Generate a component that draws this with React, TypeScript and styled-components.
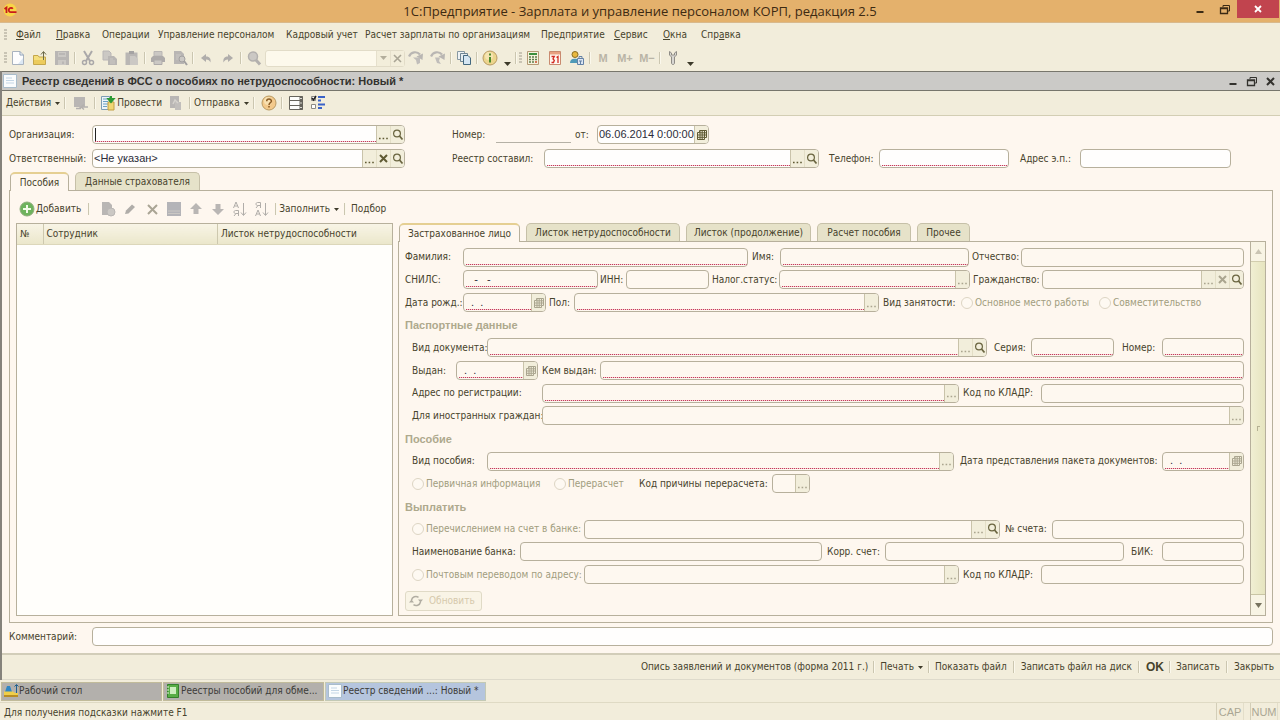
import React from 'react';
import styled, { createGlobalStyle, css } from 'styled-components';

const ui = '"DejaVu Sans Condensed", "DejaVu Sans", sans-serif';
const arial = '"Liberation Sans", Arial, sans-serif';
const c = {
  bar: '#f2eddb',
  form: '#fef7ef',
  text: '#47432c',
  line: '#b7b09c',
  dim: '#a19d7e',
  head: '#aea98d',
  tab: '#e6e2c9',
};

const GlobalStyle = createGlobalStyle`
  *, *::before, *::after { box-sizing: border-box; }
  body { margin: 0; background: ${c.bar}; }
  button, input, table { font: inherit; color: inherit; }
  button { border: 0; padding: 0; background: none; white-space: nowrap; }
`;

const Shell = styled.div`
  min-height: 100vh;
  display: flex;
  flex-direction: column;
  font: 10px/14px ${ui};
  color: ${c.text};
  background: ${c.bar};
`;

/* ---------- window frame ---------- */

const TitleBar = styled.header`
  height: 23px;
  display: grid;
  grid-template-columns: 1fr auto 1fr;
  background: #e4b16c;
  border-bottom: 1px solid #d9b98c;
`;
const AppIcon = styled.div`
  padding: 3px 0 0 3px;
  svg { display: block; }
`;
const AppTitle = styled.h1`
  margin: 0;
  font: 13px/23px "Open Sans", sans-serif;
  color: #3d2a12;
`;
const WindowButtons = styled.div`
  display: flex;
  justify-content: flex-end;
  padding-right: 1px;
`;
const WindowButton = styled.button<{ $close?: boolean }>`
  width: ${p => (p.$close ? 42 : 25)}px;
  height: 18px;
  display: flex;
  align-items: center;
  justify-content: center;
  color: ${p => (p.$close ? '#fff' : '#3a2a14')};
  background: ${p => (p.$close ? '#c1444e' : 'none')};
`;

const MenuBar = styled.nav`
  height: 23px;
  display: flex;
  align-items: center;
  padding-left: 4px;
`;
const MenuItem = styled.button<{ $w: number }>`
  width: ${p => p.$w}px;
  text-align: left;
  &:first-of-type { margin-left: 9px; }
`;
const Grip = styled.i`
  width: 3px;
  height: 12px;
  background: repeating-linear-gradient(#c9c4b4 0 2px, transparent 2px 3px);
`;

const ToolBar = styled.div`
  height: 25px;
  display: flex;
  align-items: center;
  padding: 0 0 1px 4px;
`;
const IconButton = styled.button<{ $w?: number; $low?: boolean }>`
  width: ${p => p.$w ?? 22}px;
  height: 20px;
  display: flex;
  justify-content: center;
  align-items: ${p => (p.$low ? 'flex-end' : 'center')};
  padding-bottom: ${p => (p.$low ? 2 : 0)}px;
  svg { display: block; }
`;
const MemoryButton = styled(IconButton)`
  font: bold 11px/14px ${arial};
  color: #b9b4a6;
`;
const DimCross = styled.span`
  display: flex;
  color: #aaa595;
`;
const Separator = styled.i<{ $m?: number }>`
  width: 2px;
  height: 12px;
  margin: 0 ${p => p.$m ?? 1}px;
  border-left: 1px solid #cbc6b0;
  border-right: 1px solid #fbf8ec;
`;
const SearchBox = styled.div`
  width: 140px;
  height: 17px;
  display: flex;
  border: 1px solid #e2dcc8;
  border-radius: 3px;
  background: #fdf9ec;
  input {
    flex: 1;
    min-width: 0;
    border: 0;
    background: none;
  }
  button {
    width: 14px;
    display: flex;
    align-items: center;
    justify-content: center;
    border-left: 1px solid #e6e0cc;
    background: #f3eedb;
  }
`;

/* ---------- document window ---------- */

const DocWindow = styled.main`
  flex: 1;
  display: flex;
  flex-direction: column;
  border-left: 2px solid #85827b;
`;
const DocTitle = styled.div`
  height: 20px;
  display: flex;
  align-items: center;
  padding-left: 1px;
  background: #cbcac7;
  border-top: 1px solid #77766c;
  border-bottom: 1px solid #77766c;
  h2 {
    flex: 1;
    margin: 0 0 0 5px;
    font: bold 11px/16px ${arial};
    color: #33322e;
  }
  button {
    width: 19px;
    height: 16px;
    display: flex;
    align-items: center;
    justify-content: center;
    color: #33322e;
  }
`;
const DocToolBar = styled.div`
  height: 25px;
  display: flex;
  align-items: center;
  padding: 0 4px;
  border-bottom: 1px solid #d3ceb4;
`;
const TextButton = styled.button<{ $bold?: boolean; $h?: number; $icon?: boolean }>`
  display: flex;
  align-items: center;
  gap: ${p => (p.$icon ? 1 : 4)}px;
  padding: 0 ${p => p.$h ?? 0}px;
  ${p => p.$bold && css`font: bold 12px/14px ${arial};`}
`;

const Body = styled.div`
  flex: 1;
  display: flex;
  flex-direction: column;
  padding: 9px 7px 7px;
  background: ${c.form};
`;
const HeaderGrid = styled.div`
  display: grid;
  grid-template-columns: 83px 313fr 47px 92px 275fr 60px 130fr 71px 151fr 42px;
  grid-auto-rows: 19px;
  row-gap: 5px;
`;
const NumberGroup = styled.div`
  grid-column: 4 / -1;
  display: grid;
  grid-template-columns: 44px 75px 26px 112px;
`;
const NumberInput = styled.input`
  min-width: 0;
  height: 18px;
  border: 0;
  border-bottom: 1px solid #b5b1a6;
  background: none;
`;

const Label = styled.label<{ $l?: number; $col?: number }>`
  padding-left: ${p => p.$l ?? 0}px;
  align-self: center;
  white-space: nowrap;
  ${p => p.$col && css`grid-column: ${p.$col};`}
`;
const FieldBox = styled.div<{ $editable?: boolean }>`
  min-width: 0;
  height: 19px;
  display: flex;
  border: 1px solid ${c.line};
  border-radius: 4px;
  overflow: hidden;
  background: ${p => (p.$editable ? '#fffefd' : '#fef8f0')};
`;
const Caret = styled.i`
  width: 1px;
  height: 13px;
  margin: 2px -3px 0 2px;
  background: #222;
`;
const FieldInput = styled.input<{ $required?: boolean }>`
  flex: 1;
  min-width: 0;
  height: 16px;
  margin: 0 0 0 1px;
  padding: 0 0 1px;
  border: 0;
  outline: 0;
  background: none;
  font: 11px/15px ${arial};
  color: #2d2d3a;
  ${p => p.$required && css`
    background: repeating-linear-gradient(90deg, #c23c5c 0 1px, #f6c9cd 1px 2px) 1px bottom / 100% 1px no-repeat;
  `}
`;
const FieldButton = styled.button<{ $first: boolean; $dim?: boolean }>`
  width: 14px;
  display: flex;
  align-items: center;
  justify-content: center;
  background: #f2eedb;
  border-left: 1px solid ${p => (p.$first ? '#c9c3aa' : '#e3dec6')};
  color: ${p => (p.$dim ? '#aaa58f' : '#5f5a33')};
`;

/* ---------- tabs ---------- */

const Tabs = styled.div`
  display: flex;
  align-items: flex-end;
  gap: 6px;
  height: 18px;
  padding-left: 1px;
`;
const TopTabs = styled(Tabs)`
  margin-top: 4px;
`;
const Tab = styled.button<{ $w: number; $on?: boolean }>`
  width: ${p => p.$w}px;
  height: 18px;
  border: 1px solid #c6c0a8;
  border-bottom: 0;
  border-radius: 5px 5px 0 0;
  background: ${c.tab};
  ${p => p.$on && css`
    height: 19px;
    margin-bottom: -1px;
    position: relative;
    border-color: ${c.line};
    border-top: 2px solid #e5cf92;
    background: ${c.form};
  `}
`;
const Panel = styled.section`
  flex: 1;
  display: flex;
  flex-direction: column;
  padding: 6px;
  border: 1px solid ${c.line};
`;
const PanelToolBar = styled.div`
  height: 24px;
  display: flex;
  align-items: center;
  margin-bottom: 2px;
  padding-left: 3px;
`;
const Split = styled.div`
  flex: 1;
  display: grid;
  grid-template-columns: 377fr 868fr;
  gap: 5px;
`;
const GridBox = styled.div`
  border: 1px solid ${c.line};
  background: #fffefb;
`;
const Table = styled.table`
  width: 100%;
  table-layout: fixed;
  border-collapse: collapse;
  th {
    height: 20px;
    padding: 0 3px;
    font-weight: normal;
    text-align: left;
    background: linear-gradient(#f8f4e6, #ebe7cb);
    border-bottom: 1px solid #dcd7ba;
  }
  th + th { border-left: 1px solid #cdc8ae; }
`;
const Details = styled.div`
  min-width: 0;
  display: flex;
  flex-direction: column;
`;
const Pane = styled.div`
  flex: 1;
  display: flex;
  border: 1px solid ${c.line};
`;
const Form = styled.form`
  flex: 1;
  min-width: 0;
  display: flex;
  flex-direction: column;
  padding: 4px 6px;
`;
const Rows = styled.div`
  flex: 1;
  display: grid;
  grid-template-rows: repeat(15, 1fr);
  margin-bottom: 5px;
`;
const Row = styled.div<{ $cols: string; $indent?: boolean }>`
  display: grid;
  grid-template-columns: ${p => p.$cols};
  align-items: center;
  padding-left: ${p => (p.$indent ? 7 : 0)}px;
`;
const GroupTitle = styled.h3`
  margin: 0;
  align-self: center;
  font: bold 11px/14px ${arial};
  color: ${c.head};
`;
const RadioLabel = styled.label`
  display: flex;
  align-items: center;
  gap: 2px;
  white-space: nowrap;
  color: ${c.dim};
  input {
    appearance: none;
    flex: none;
    width: 12px;
    height: 12px;
    margin: 0;
    border: 1px solid #ddd5c4;
    border-radius: 50%;
    background: #fef9f2;
  }
`;
const RefreshButton = styled.button`
  align-self: flex-start;
  width: 77px;
  height: 20px;
  display: flex;
  align-items: center;
  gap: 6px;
  padding-left: 3px;
  border: 1px solid #e0dac6;
  border-radius: 3px;
  background: #f9f4e6;
  color: #d6c9ac;
`;
const ScrollBar = styled.div`
  width: 15px;
  display: flex;
  flex-direction: column;
  border-left: 1px solid ${c.line};
  button {
    height: 20px;
    display: flex;
    align-items: center;
    justify-content: center;
    background: #f8f4e4;
    border-bottom: 1px solid #d2cdae;
  }
  button:last-child { border: 0; }
`;
const Thumb = styled.i`
  flex: 1;
  display: flex;
  align-items: center;
  justify-content: center;
  background: linear-gradient(90deg, #f1efd3, #e6e4bf);
  border-bottom: 1px solid #c9c5a4;
`;
const CommentRow = styled.div`
  display: grid;
  grid-template-columns: 83px 1fr;
  margin-top: 4px;
`;
const CommandBar = styled.footer`
  height: 27px;
  display: flex;
  align-items: center;
  justify-content: flex-end;
  padding-right: 6px;
  border-top: 2px solid #d2cdb9;
  border-bottom: 1px solid #dedacb;
`;

/* ---------- bottom bars ---------- */

const TaskBar = styled.div`
  height: 22px;
  display: flex;
  align-items: center;
  gap: 1px;
  padding-left: 1px;
`;
const Task = styled.button<{ $on?: boolean }>`
  width: 161px;
  height: 19px;
  display: flex;
  align-items: center;
  padding-left: 1px;
  color: #3c3b38;
  background: ${p => (p.$on ? '#b5c5de' : '#b3b0ac')};
  border: 1px solid ${p => (p.$on ? '#c3c9b5' : '#c1bb9a')};
  svg { flex: none; width: 16px; }
`;
const StatusBar = styled.div`
  height: 18px;
  display: flex;
  align-items: center;
  gap: 6px;
  padding: 0 2px 0 4px;
  border-top: 1px solid #dfdac4;
  span { flex: 1; padding-top: 2px; }
`;
const KeyState = styled.b`
  width: 28px;
  height: 17px;
  font: 11px/19px ${arial};
  text-align: center;
  color: #aaa693;
  border-left: 1px solid #d3ceb8;
  border-right: 1px solid #e3dec9;
`;

/* ---------- icons ---------- */

type IconProps = { children: React.ReactNode; w?: number; h?: number };
const Svg = ({ children, w = 16, h = 16 }: IconProps) => (
  <svg width={w} height={h} viewBox={`0 0 ${w} ${h}`} fill="none" aria-hidden="true">{children}</svg>
);
const g = '#b9b6b4';
const g2 = '#cbc8c4';

const Logo = () => (
  <Svg w={14} h={14}>
    <circle cx="7" cy="7" r="6.5" fill="#f8d548" />
    <path d="M1.500 6 3.500 4.500V10" stroke="#c81a1a" strokeWidth="1.800" />
    <path d="M9.800 5.800A2.200 2.200 0 1 0 8 9.200H13.500" stroke="#c81a1a" strokeWidth="1.800" />
  </Svg>
);
const Minimize = () => <Svg w={10} h={10}><path d="M1.500 8H8.500" stroke="currentColor" strokeWidth="2" /></Svg>;
const Restore = () => (
  <Svg w={12} h={11}>
    <path d="M4 3V1.500H10.500V7H9" stroke="currentColor" />
    <path d="M1.500 4H8.500V9.500H1.500ZM1.500 4.500H8.500" stroke="currentColor" strokeWidth="1.300" />
  </Svg>
);
const Cross = ({ s = 9, t = 1.6 }: { s?: number; t?: number }) => (
  <Svg w={s} h={s}><path d={`M1 1 ${s - 1} ${s - 1}M${s - 1} 1 1 ${s - 1}`} stroke="currentColor" strokeWidth={t} /></Svg>
);
const Page = () => (
  <Svg>
    <path d="M2.500 1.500H10L13.500 5V14.500H2.500Z" fill="#fdfdfe" stroke="#a9b3bf" />
    <path d="M10 1.500V5H13.500" stroke="#8fa2b8" />
    <path d="M8 14H13V8Z" fill="#dce8f4" />
  </Svg>
);
const Folder = () => (
  <Svg>
    <path d="M1.500 5.500H6L7 7H13.500V14.500H1.500Z" fill="#f5df7d" stroke="#c5a74b" />
    <path d="M2 10H13V14H2Z" fill="#eccb5c" />
    <path d="M11.500 10V2M9 4.500 11.500 1.500 14 4.500" stroke="#6d6a4a" />
  </Svg>
);
const Floppy = () => (
  <Svg>
    <path d="M1 1H15V15H1Z" fill={g} />
    <path d="M4 2H12V7H4ZM4 10H12V15H4Z" fill={g2} />
    <path d="M5 4H11M9 11.500V14" stroke="#a9a6a6" />
  </Svg>
);
const Cut = () => (
  <Svg>
    <path d="M4 1 10 11M12 1 6 11" stroke="#aaa8a9" strokeWidth="2" />
    <circle cx="4.500" cy="12.500" r="2" stroke="#aaa8a9" strokeWidth="1.500" />
    <circle cx="11.500" cy="12.500" r="2" stroke="#aaa8a9" strokeWidth="1.500" />
  </Svg>
);
const Copy = () => (
  <Svg>
    <path d="M1 1H7L9 3V10H1Z" fill={g2} stroke="#b9b6b6" />
    <path d="M6 6H12L15 9V15H6Z" fill={g} />
    <path d="M8 9H11M8 11H13M8 13H13" stroke={g2} />
  </Svg>
);
const Paste = () => (
  <Svg>
    <path d="M1.500 2.500H13.500V15H1.500Z" fill={g} />
    <path d="M5 1H10V4H5Z" fill="#a5a3a3" />
    <path d="M6 6H11L14 9V15H6Z" fill={g2} />
  </Svg>
);
const Printer = () => (
  <Svg>
    <path d="M4 1.500H12V6H4Z" fill={g2} stroke={g} />
    <path d="M3 6H13L15 8V12H1V8Z" fill="#aeabaa" />
    <path d="M4 10H12V14.500H4Z" fill={g2} stroke="#aeabaa" />
  </Svg>
);
const Preview = () => (
  <Svg>
    <path d="M2 1H9L12 4V14H2Z" fill={g} />
    <path d="M4 5H9M4 7H8M4 9H7" stroke={g2} />
    <circle cx="10" cy="9" r="3" fill={g2} stroke="#a2a0a0" />
    <path d="m12 11 3 4" stroke="#a2a0a0" strokeWidth="2" />
  </Svg>
);
const Undo = ({ flip }: { flip?: boolean }) => (
  <Svg>
    <path transform={flip ? 'translate(16 0) scale(-1 1)' : undefined} d="M3 8 8 4V6.500C12 6.500 13 9 12.500 12.500 11.500 10.500 10.500 9.500 8 9.500V12Z" fill="#b0adab" />
  </Svg>
);
const Search = () => (
  <Svg>
    <circle cx="7" cy="6.500" r="4.500" fill={g2} stroke="#b3b0ae" strokeWidth="1.500" />
    <path d="m10 10 4 4.500" stroke="#b3b0ae" strokeWidth="3" />
  </Svg>
);
const Turn = ({ flip }: { flip?: boolean }) => (
  <Svg>
    <path d="M1 6.500C3 1.500 9 1 12 4.500" stroke="#b9b6b3" strokeWidth="2.200" />
    <path d="M8.500 6.500 15 3.500 14.500 10Z" fill="#b9b6b3" />
    <path d={flip ? 'M5 7.500H10L9 11 11 14 7 13Z' : 'M5 7.500H12V13L9 14.500 8 10Z'} fill="#c0bdba" />
  </Svg>
);
const Windows = () => (
  <Svg>
    <path d="M1.500 1.500H8.500V9.500H1.500Z" fill="#eef2f4" stroke="#8798a2" />
    <path d="M4.500 3.500H11.500V11.500H4.500Z" fill="#e6edf1" stroke="#6f8593" />
    <path d="M7.500 5.500H12L14.500 8V14.500H7.500Z" fill="#d5e6f3" stroke="#44687f" />
  </Svg>
);
const Round = ({ mark, color }: { mark: 'i' | '?'; color: string }) => (
  <Svg>
    <circle cx="8" cy="8" r="7" fill={mark === 'i' ? '#ecd58d' : '#f3c98b'} stroke="#b99a62" />
    <circle cx="7" cy="6" r="4" fill="#faeac1" opacity=".7" />
    {mark === 'i'
      ? <path d="M8 3.500V5.500M8 7V12.500" stroke={color} strokeWidth="2" />
      : <path d="M5.700 6.200C5.700 3.300 10.500 3.300 10.400 6.200 10.300 7.700 8 7.800 8 10M8 11V12.600" stroke={color} strokeWidth="1.500" />}
  </Svg>
);
const Down = ({ color = '#3d3a2a', s = 7 }: { color?: string; s?: number }) => (
  <Svg w={s} h={s > 5 ? 4 : 3}><path d={`M0 0H${s}L${s / 2} ${s > 5 ? 4 : 3}Z`} fill={color} /></Svg>
);
const Calculator = () => (
  <Svg>
    <path d="M2.500 1.500H13.500V14.500H2.500Z" fill="#f6f2dd" stroke="#b59a74" />
    <path d="M4 3H12V5H4Z" fill="#3c8f3c" />
    <path d="M4 7H6M7 7H9M10 7H12M4 9.500H6M7 9.500H9M10 9.500H12M4 12H6M7 12H9" stroke="#5d7c4a" strokeWidth="1.500" />
    <path d="M10 12H12" stroke="#c84a2a" strokeWidth="1.500" />
  </Svg>
);
const Calendar31 = () => (
  <Svg>
    <path d="M2.500 1.500H13.500V14.500H2.500Z" fill="#fff7ef" stroke="#c98a6f" />
    <path d="M3 2H13V4.500H3Z" fill="#e8a080" />
    <path d="M4.500 6.500H7.300L6 9 7.300 10.500 6.500 12.500H4.500M9.500 7.500 11 6.500V13" stroke="#d22a22" strokeWidth="1.300" />
  </Svg>
);
const Person = () => (
  <Svg>
    <circle cx="6" cy="4.500" r="3" fill="#e8b83e" stroke="#8a6d22" />
    <path d="M1 13C1 9 4 8 8 9V13Z" fill="#4f9ab8" />
    <path d="M8.500 8.500H14.500V14.500H8.500Z" fill="#dce6f2" stroke="#6482a6" />
    <path d="M10 8V6.500H13V8M10 11H13M11.500 11V14" stroke="#6482a6" />
  </Svg>
);
const Wrench = () => (
  <Svg>
    <path d="M4.500 1.500V5L6.500 7V13C6.500 15 9.500 15 9.500 13V7L11.500 5V1.500L9.500 3V5H6.500V3Z" fill="#d8d6d2" stroke="#8f8c86" />
  </Svg>
);
const Sheet = () => (
  <Svg w={14} h={14}>
    <path d="M.5.5H13.500V13.500H.5Z" fill="#fafcfd" stroke="#a8bccb" />
    <path d="M3 4H9M3 6.500H11M3 9H11" stroke="#c4d6e6" />
  </Svg>
);
const SaveTurn = () => (
  <Svg>
    <path d="M1 2H12V12H1Z" fill={g} />
    <path d="M3 13.500H8M15 12H8L11 9.500M8 12 11 14.500" stroke="#b3b0ae" strokeWidth="1.500" />
  </Svg>
);
const Post = () => (
  <Svg>
    <path d="M1.500 1.500H9.500V14.500H1.500Z" fill="#eef4f8" stroke="#7d9cb4" />
    <path d="M3 4H8M3 6.500H8M3 9H8M3 11.500H7" stroke="#6ba0c4" />
    <path d="M8 7H14V15H8Z" fill="#f0d774" stroke="#c3a045" />
    <path d="M11 1V6M8.500 4 11 7 13.500 4Z" fill="#2c9a34" stroke="#2c9a34" strokeWidth="2" />
  </Svg>
);
const Unpost = () => (
  <Svg>
    <path d="M3 1H12V13H3Z" fill={g} />
    <path d="M8 7H14V15H8Z" fill="#c1bebb" />
    <path d="M6 9 8 5 11 8" stroke="#d5d2cd" strokeWidth="1.500" />
  </Svg>
);
const ListIcon = () => (
  <Svg>
    <path d="M1.500 1.500H14.500V14.500H1.500ZM1.500 5.500H14.500M1.500 10.500H14.500" fill="#fdfdfb" stroke="#66645c" />
    <path d="M13 1V15" stroke="#66645c" strokeWidth="3" />
    <path d="M12 3.500H14M12 8H14M12 12.500H14" stroke="#dcdad2" />
  </Svg>
);
const CheckList = () => (
  <Svg>
    <path d="M1.500 1.500H5.500V5.500H1.500ZM1.500 9.500H5.500V13.500H1.500Z" fill="#fff" stroke="#8d8b84" />
    <path d="M2 3 3.500 5 6 1" stroke="#222" strokeWidth="1.500" />
    <path d="M8 2H15M8 5.500H11M8 9.500H15M8 13H12" stroke="#3a62c8" strokeWidth="2" />
  </Svg>
);
const Plus = () => (
  <Svg>
    <circle cx="8" cy="8" r="7" fill="#6eb35e" stroke="#8fae7c" />
    <path d="M8 4V12M4 8H12" stroke="#f2fbe9" strokeWidth="2" />
  </Svg>
);
const CopyRow = () => (
  <Svg><path d="M2 1H9L12 4V14H2Z" fill={g} /><circle cx="11" cy="11" r="4" fill={g2} stroke={g} /></Svg>
);
const Pencil = () => <Svg><path d="M3 13 4 9.500 10 3.500 13 6 6.500 12.500Z" fill="#b0ada9" /></Svg>;
const GrayBox = () => <Svg><path d="M1 1H15V15H1Z" fill="#b4b4b8" /><path d="M2 10H14M2 12.500H14" stroke={g2} /></Svg>;
const Arrow = ({ down }: { down?: boolean }) => (
  <Svg><path d={down ? 'M8 14 2 8H5.500V3H10.500V8H14Z' : 'M8 2 14 8H10.500V13H5.500V8H2Z'} fill={g} /></Svg>
);
const Sort = ({ desc }: { desc?: boolean }) => (
  <Svg>
    <path d={desc ? 'M6.500 7V1.500H3.500C1.500 1.500 1.500 4.500 3.500 4.500H6.500M4 4.500 2 7' : 'M1.500 7 4 1 6.500 7M2.500 5H5.500'} stroke="#b0ada9" />
    <path d={desc ? 'M1.500 15 4 9 6.500 15M2.500 13H5.500' : 'M6.500 15V9.500H3.500C1.500 9.500 1.500 12.500 3.500 12.500H6.500M4 12.500 2 15'} stroke="#b0ada9" />
    <path d="M11.500 2V14M9 11.500 11.500 14.500 14 11.500" stroke="#b0ada9" />
  </Svg>
);
const Refresh = () => (
  <Svg w={14} h={14}>
    <path d="M2.500 6A4.500 4.500 0 0 1 9.500 3.300M11.500 8A4.500 4.500 0 0 1 4.500 10.700" stroke="#b1ada2" strokeWidth="1.500" />
    <path d="M0 8.500 2.500 5.500 5 8.500ZM9 5.500H14L11.500 8.500Z" fill="#b1ada2" />
  </Svg>
);
const Desk = () => (
  <Svg>
    <path d="M2 9 4 3H7L9 9Z" fill="#2f86c4" />
    <path d="M1 8.500H10L12 10H15V12H1Z" fill="#f0cf4a" />
    <path d="M1 12H15V14H1Z" fill="#b98e24" />
    <path d="M13.500 10V2M11.500 3.500 13.500 1.500 15.500 3.500" stroke="#20608c" />
  </Svg>
);
const GreenBook = () => (
  <Svg>
    <path d="M2.500 1.500H13.500V14.500H2.500Z" fill="#58ad46" stroke="#34802c" />
    <path d="M5 4H11V11H5Z" fill="#cdeebf" />
    <path d="M2 4H4M2 7H4M2 10H4" stroke="#e4f2da" />
  </Svg>
);
const Dots = () => (
  <Svg w={11} h={12}><path d="M1 9.500H2.600M4.600 9.500H6.200M8.200 9.500H9.800" stroke="currentColor" strokeWidth="1.500" /></Svg>
);
const Loupe = () => (
  <Svg w={12} h={12}>
    <circle cx="5" cy="4.500" r="3.400" stroke="#6a6540" strokeWidth="1.200" />
    <path d="m7.500 7 3 3.500" stroke="#6a6540" strokeWidth="1.800" />
  </Svg>
);
const DateGrid = () => (
  <Svg w={11} h={12}>
    <path d="M3.500 1.500H10.500V8.500H8.500V10.500H1.500V3.500H3.500ZM1.500 6H10.500M1.500 8.300H8.500M4 2V10.500M6.200 2V10.500M8.500 2V8.500M3.500 3.800H10.500" stroke="currentColor" />
  </Svg>
);

/* ---------- fields ---------- */

type Btn = 'dots' | 'clear' | 'find' | 'date';
type FieldProps = { id: string; value?: string; req?: boolean; edit?: boolean; caret?: boolean; btns?: Btn[] };
const names: Record<Btn, string> = { dots: 'Выбрать', clear: 'Очистить', find: 'Открыть', date: 'Календарь' };
const Field = ({ id, value = '', req, edit, caret, btns = [] }: FieldProps) => (
  <FieldBox $editable={edit}>
    {caret && <Caret />}
    <FieldInput id={id} defaultValue={value} readOnly={!edit} $required={req} />
    {btns.map((b, i) => (
      <FieldButton type="button" key={b} $first={i === 0} $dim={!edit && b !== 'find'} aria-label={names[b]}>
        {b === 'dots' ? <Dots /> : b === 'clear' ? <Cross s={9} t={2} /> : b === 'find' ? <Loupe /> : <DateGrid />}
      </FieldButton>
    ))}
  </FieldBox>
);
const Radio = ({ name, children }: { name: string; children: React.ReactNode }) => (
  <RadioLabel><input type="radio" name={name} disabled />{children}</RadioLabel>
);
const EMPTY_DATE = '\u00a0\u00a0.\u00a0\u00a0.';

const menu: [React.ReactNode, number][] = [
  [<><u>Ф</u>айл</>, 40],
  [<><u>П</u>равка</>, 46],
  ['Операции', 56],
  ['Управление персоналом', 128],
  ['Кадровый учет', 79],
  ['Расчет зарплаты по организациям', 176],
  ['Предприятие', 73],
  [<><u>С</u>ервис</>, 49],
  [<><u>О</u>кна</>, 38],
  [<>Спр<u>а</u>вка</>, 50],
];

const MainToolBar = () => (
  <ToolBar>
    <Grip />
    <IconButton aria-label="Создать"><Page /></IconButton>
    <IconButton aria-label="Открыть"><Folder /></IconButton>
    <IconButton aria-label="Сохранить"><Floppy /></IconButton>
    <Separator />
    <IconButton aria-label="Вырезать"><Cut /></IconButton>
    <IconButton aria-label="Копировать"><Copy /></IconButton>
    <IconButton aria-label="Вставить"><Paste /></IconButton>
    <Separator />
    <IconButton aria-label="Печать"><Printer /></IconButton>
    <IconButton aria-label="Просмотр"><Preview /></IconButton>
    <Separator />
    <IconButton aria-label="Отменить"><Undo /></IconButton>
    <IconButton aria-label="Вернуть"><Undo flip /></IconButton>
    <Separator />
    <IconButton aria-label="Найти"><Search /></IconButton>
    <SearchBox>
      <input aria-label="Поиск" />
      <button aria-label="История"><Down color="#b3ae9c" /></button>
      <button aria-label="Очистить"><DimCross><Cross /></DimCross></button>
    </SearchBox>
    <IconButton aria-label="Найти следующий"><Turn /></IconButton>
    <IconButton aria-label="Найти предыдущий"><Turn flip /></IconButton>
    <Separator />
    <IconButton aria-label="Окна"><Windows /></IconButton>
    <Separator />
    <IconButton aria-label="Справка"><Round mark="i" color="#4c8a2c" /></IconButton>
    <IconButton $w={12} $low aria-label="Ещё"><Down /></IconButton>
    <Separator $m={2} />
    <Grip />
    <IconButton aria-label="Калькулятор"><Calculator /></IconButton>
    <IconButton aria-label="Календарь"><Calendar31 /></IconButton>
    <IconButton aria-label="Пользователь"><Person /></IconButton>
    <Separator />
    <MemoryButton>M</MemoryButton>
    <MemoryButton>M+</MemoryButton>
    <MemoryButton>M−</MemoryButton>
    <Separator />
    <IconButton aria-label="Настройка"><Wrench /></IconButton>
    <IconButton $w={12} $low aria-label="Ещё"><Down /></IconButton>
  </ToolBar>
);

const InsuredForm = () => (
  <Form>
    <Rows>
      <Row $cols="58px 285fr 32px 189fr 52px 223fr">
        <Label htmlFor="last">Фамилия:</Label><Field id="last" req />
        <Label $l={4} htmlFor="first">Имя:</Label><Field id="first" req />
        <Label $l={3} htmlFor="middle">Отчество:</Label><Field id="middle" />
      </Row>
      <Row $cols="58px 135fr 28px 83fr 70px 191fr 72px 202fr">
        <Label htmlFor="snils">СНИЛС:</Label><Field id="snils" req value={'\u00a0\u00a0 -\u00a0\u00a0 -'} />
        <Label $l={2} htmlFor="inn">ИНН:</Label><Field id="inn" />
        <Label $l={3} htmlFor="tax">Налог.статус:</Label><Field id="tax" req btns={['dots']} />
        <Label $l={3} htmlFor="citizen">Гражданство:</Label><Field id="citizen" btns={['dots', 'clear', 'find']} />
      </Row>
      <Row $cols="58px 83px 28px 1fr 82px 138px 145px">
        <Label htmlFor="birth">Дата рожд.:</Label><Field id="birth" req value={EMPTY_DATE} btns={['date']} />
        <Label $l={3} htmlFor="sex">Пол:</Label><Field id="sex" req btns={['dots']} />
        <Label $l={4} as="span">Вид занятости:</Label>
        <Radio name="job">Основное место работы</Radio>
        <Radio name="job">Совместительство</Radio>
      </Row>
      <GroupTitle>Паспортные данные</GroupTitle>
      <Row $indent $cols="75px 500fr 44px 83fr 48px 82fr">
        <Label htmlFor="doc">Вид документа:</Label><Field id="doc" req btns={['dots', 'find']} />
        <Label $l={7} htmlFor="series">Серия:</Label><Field id="series" req />
        <Label $l={8} htmlFor="docno">Номер:</Label><Field id="docno" req />
      </Row>
      <Row $indent $cols="44px 82px 62px 1fr">
        <Label htmlFor="issued">Выдан:</Label><Field id="issued" req value={EMPTY_DATE} btns={['date']} />
        <Label $l={4} htmlFor="issuer">Кем выдан:</Label><Field id="issuer" req />
      </Row>
      <Row $indent $cols="130px 417fr 82px 203fr">
        <Label htmlFor="addr">Адрес по регистрации:</Label><Field id="addr" req btns={['dots']} />
        <Label $l={4} htmlFor="kladr">Код по КЛАДР:</Label><Field id="kladr" />
      </Row>
      <Row $indent $cols="130px 1fr">
        <Label htmlFor="foreign">Для иностранных граждан:</Label><Field id="foreign" btns={['dots']} />
      </Row>
      <GroupTitle>Пособие</GroupTitle>
      <Row $indent $cols="75px 1fr 208px 82px">
        <Label htmlFor="kind">Вид пособия:</Label><Field id="kind" req btns={['dots']} />
        <Label $l={6} htmlFor="packdate">Дата представления пакета документов:</Label>
        <Field id="packdate" req value={EMPTY_DATE} btns={['date']} />
      </Row>
      <Row $indent $cols="142px 85px 133px 38px">
        <Radio name="info">Первичная информация</Radio>
        <Radio name="info">Перерасчет</Radio>
        <Label htmlFor="reason">Код причины перерасчета:</Label><Field id="reason" btns={['dots']} />
      </Row>
      <GroupTitle>Выплатить</GroupTitle>
      <Row $indent $cols="172px 416fr 52px 192fr">
        <Radio name="pay">Перечислением на счет в банке:</Radio><Field id="account-bank" btns={['dots', 'find']} />
        <Label $l={5} htmlFor="account">№ счета:</Label><Field id="account" />
      </Row>
      <Row $indent $cols="108px 302fr 63px 239fr 38px 82fr">
        <Label htmlFor="bank">Наименование банка:</Label><Field id="bank" />
        <Label $l={5} htmlFor="corr">Корр. счет:</Label><Field id="corr" />
        <Label $l={7} htmlFor="bik">БИК:</Label><Field id="bik" />
      </Row>
      <Row $indent $cols="172px 375fr 82px 203fr">
        <Radio name="pay">Почтовым переводом по адресу:</Radio><Field id="post" btns={['dots']} />
        <Label $l={4} htmlFor="kladr2">Код по КЛАДР:</Label><Field id="kladr2" />
      </Row>
    </Rows>
    <RefreshButton type="button" disabled><Refresh />Обновить</RefreshButton>
  </Form>
);

export default function App() {
  return (
    <Shell>
      <GlobalStyle />
      <TitleBar>
        <AppIcon><Logo /></AppIcon>
        <AppTitle>1С:Предприятие - Зарплата и управление персоналом КОРП, редакция 2.5</AppTitle>
        <WindowButtons>
          <WindowButton aria-label="Свернуть"><Minimize /></WindowButton>
          <WindowButton aria-label="Восстановить"><Restore /></WindowButton>
          <WindowButton $close aria-label="Закрыть"><Cross s={8} t={1.8} /></WindowButton>
        </WindowButtons>
      </TitleBar>
      <MenuBar>
        <Grip />
        {menu.map(([t, w], i) => <MenuItem key={i} $w={w}>{t}</MenuItem>)}
      </MenuBar>
      <MainToolBar />
      <DocWindow>
        <DocTitle>
          <Sheet />
          <h2>Реестр сведений в ФСС о пособиях по нетрудоспособности: Новый *</h2>
          <button aria-label="Свернуть окно"><Minimize /></button>
          <button aria-label="Восстановить окно"><Restore /></button>
          <button aria-label="Закрыть окно"><Cross s={9} t={2} /></button>
        </DocTitle>
        <DocToolBar>
          <TextButton>Действия<Down s={5} /></TextButton>
          <Separator $m={4} />
          <IconButton aria-label="Записать и закрыть"><SaveTurn /></IconButton>
          <Separator $m={2} />
          <TextButton $icon $h={2}><Post />Провести</TextButton>
          <IconButton aria-label="Отмена проведения"><Unpost /></IconButton>
          <Separator $m={3} />
          <TextButton>Отправка<Down s={5} /></TextButton>
          <Separator $m={4} />
          <IconButton $w={20} aria-label="Справка"><Round mark="?" color="#8a5a22" /></IconButton>
          <Separator $m={2} />
          <IconButton aria-label="Список"><ListIcon /></IconButton>
          <IconButton aria-label="Настройка списка"><CheckList /></IconButton>
        </DocToolBar>
        <Body>
          <HeaderGrid>
            <Label htmlFor="org">Организация:</Label>
            <Field id="org" req edit caret btns={['dots', 'find']} />
            <NumberGroup>
              <Label htmlFor="num">Номер:</Label>
              <NumberInput id="num" />
              <Label $l={4} htmlFor="date">от:</Label>
              <Field id="date" edit value={'06.06.2014 0:00:00'} btns={['date']} />
            </NumberGroup>
            <Label htmlFor="resp">Ответственный:</Label>
            <Field id="resp" edit value="<Не указан>" btns={['dots', 'clear', 'find']} />
            <Label $col={4} htmlFor="author">Реестр составил:</Label>
            <Field id="author" req edit btns={['dots', 'find']} />
            <Label $l={10} htmlFor="phone">Телефон:</Label>
            <Field id="phone" req edit />
            <Label $l={11} htmlFor="mail">Адрес э.п.:</Label>
            <Field id="mail" edit />
          </HeaderGrid>
          <TopTabs>
            <Tab $w={59} $on>Пособия</Tab>
            <Tab $w={125}>Данные страхователя</Tab>
          </TopTabs>
          <Panel>
            <PanelToolBar>
              <TextButton $icon><Plus />Добавить</TextButton>
              <Separator $m={7} />
              <IconButton aria-label="Скопировать"><CopyRow /></IconButton>
              <IconButton aria-label="Изменить"><Pencil /></IconButton>
              <IconButton aria-label="Удалить"><DimCross><Cross s={11} t={2} /></DimCross></IconButton>
              <IconButton aria-label="Завершить редактирование"><GrayBox /></IconButton>
              <IconButton aria-label="Вверх"><Arrow /></IconButton>
              <IconButton aria-label="Вниз"><Arrow down /></IconButton>
              <IconButton aria-label="По возрастанию"><Sort /></IconButton>
              <IconButton aria-label="По убыванию"><Sort desc /></IconButton>
              <Separator $m={2} />
              <TextButton>Заполнить<Down s={5} /></TextButton>
              <Separator $m={5} />
              <TextButton>Подбор</TextButton>
            </PanelToolBar>
            <Split>
              <GridBox>
                <Table>
                  <colgroup><col width="26" /><col /><col /></colgroup>
                  <thead><tr><th>№</th><th>Сотрудник</th><th>Листок нетрудоспособности</th></tr></thead>
                </Table>
              </GridBox>
              <Details>
                <Tabs>
                  <Tab $w={121} $on>Застрахованное лицо</Tab>
                  <Tab $w={154}>Листок нетрудоспособности</Tab>
                  <Tab $w={125}>Листок (продолжение)</Tab>
                  <Tab $w={94}>Расчет пособия</Tab>
                  <Tab $w={53}>Прочее</Tab>
                </Tabs>
                <Pane>
                  <InsuredForm />
                  <ScrollBar>
                    <button aria-label="Вверх"><Svg w={7} h={5}><path d="M0 5H7L3.500 0Z" fill="#c9c4b2" /></Svg></button>
                    <Thumb><Svg w={3} h={5}><path d="M.5 0V5M0 .5H3" stroke="#b5b193" /></Svg></Thumb>
                    <button aria-label="Вниз"><Svg w={7} h={5}><path d="M0 0H7L3.500 5Z" fill="#77735f" /></Svg></button>
                  </ScrollBar>
                </Pane>
              </Details>
            </Split>
          </Panel>
          <CommentRow>
            <Label htmlFor="comment">Комментарий:</Label>
            <Field id="comment" edit />
          </CommentRow>
        </Body>
        <CommandBar>
          <TextButton>Опись заявлений и документов (форма 2011 г.)</TextButton>
          <Separator $m={5} />
          <TextButton>Печать<Down s={5} /></TextButton>
          <Separator $m={5} />
          <TextButton>Показать файл</TextButton>
          <Separator $m={6} />
          <TextButton>Записать файл на диск</TextButton>
          <Separator $m={6} />
          <TextButton $bold>OK</TextButton>
          <Separator $m={5} />
          <TextButton>Записать</TextButton>
          <Separator $m={6} />
          <TextButton>Закрыть</TextButton>
        </CommandBar>
      </DocWindow>
      <TaskBar>
        <Task><Desk />Рабочий стол</Task>
        <Task><GreenBook />Реестры пособий для обме...</Task>
        <Task $on><Sheet />Реестр сведений ...: Новый *</Task>
      </TaskBar>
      <StatusBar>
        <span>Для получения подсказки нажмите F1</span>
        <KeyState>CAP</KeyState>
        <KeyState>NUM</KeyState>
      </StatusBar>
    </Shell>
  );
}
